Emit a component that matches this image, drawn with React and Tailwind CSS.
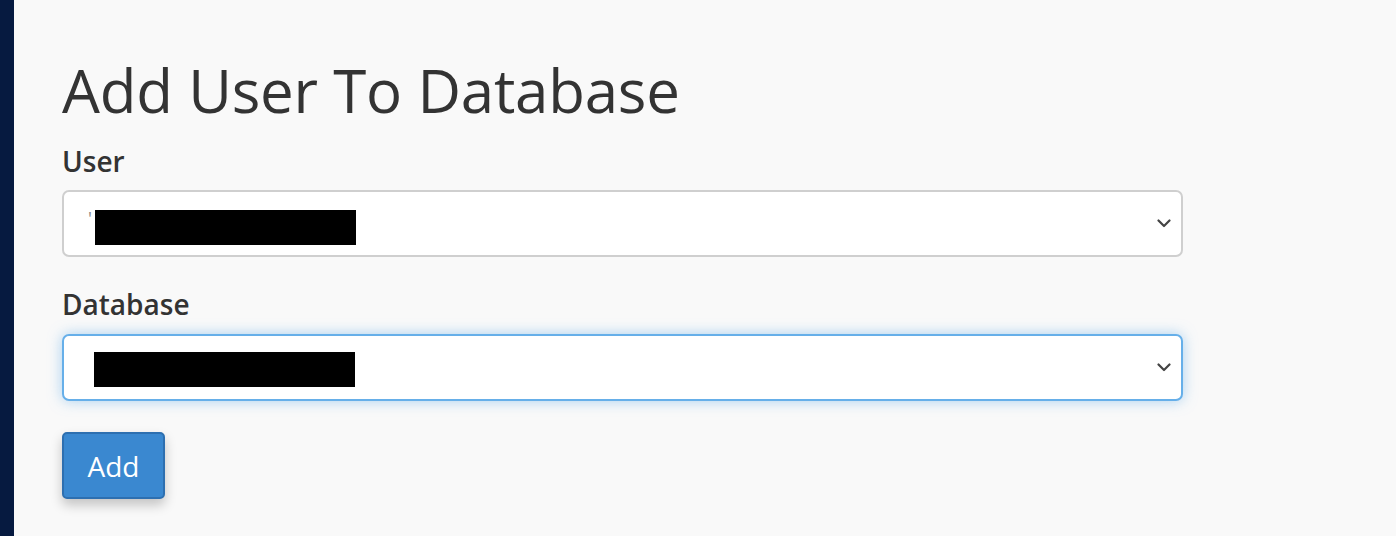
export default function App() {
  const Chevron = () => (
    <svg width="14" height="9" viewBox="0 0 14 9" className="shrink-0">
      <path d="M1.5 1.5 L7 7 L12.5 1.5" fill="none" stroke="#444" strokeWidth="2.2" strokeLinecap="round" strokeLinejoin="round" />
    </svg>
  );
  return (
    <div className="flex h-[536px] w-[1396px] bg-[#f9f9f9] overflow-hidden" style={{ fontFamily: '"Open Sans", "Liberation Sans", sans-serif' }}>
      <div className="w-[14px] shrink-0 bg-[#061a40]" />
      <div className="flex flex-col pl-[48px] pt-[57px]">
        <h1 className="text-[60px] leading-[66px] font-normal text-[#333] tracking-[-0.2px]">Add User To Database</h1>
        <label className="mt-[18px] text-[28px] leading-[40px] font-semibold text-[#333]">User</label>
        <div className="mt-[9px] flex h-[67px] w-[1121px] items-center rounded-[7px] border-2 border-[#cfcfcf] bg-white pl-[24px] pr-[10px]">
          <div className="mt-[8px] flex items-start">
            <span className="mr-[3px] mt-[0px] text-[18px] leading-[16px] text-[#888]">'</span>
            <div className="h-[35px] w-[261px] bg-black" />
          </div>
          <div className="flex-1" />
          <Chevron />
        </div>
        <label className="mt-[27px] text-[28px] leading-[40px] font-semibold text-[#333]">Database</label>
        <div className="mt-[10px] flex h-[67px] w-[1121px] items-center rounded-[7px] border-2 border-[#66afe9] bg-white pl-[30px] pr-[10px] shadow-[0_0_14px_rgba(102,175,233,0.55)]">
          <div className="mt-[4px] h-[35px] w-[261px] bg-black" />
          <div className="flex-1" />
          <Chevron />
        </div>
        <button className="mt-[31px] flex h-[67px] w-[103px] items-center justify-center rounded-[5px] border-2 border-[#2d6fb0] bg-[#3a88d0] text-[28px] text-white shadow-[0_6px_12px_rgba(0,0,0,0.22)]">Add</button>
      </div>
    </div>
  );
}
